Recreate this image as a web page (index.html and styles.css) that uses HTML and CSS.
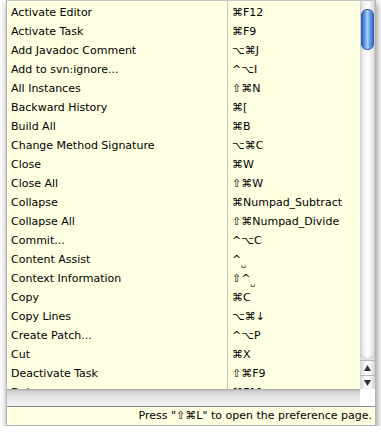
FILE: index.html
```html
<!DOCTYPE html>
<html>
<head>
<meta charset="utf-8">
<link rel="stylesheet" href="styles.css">
</head>
<body>
<div class="window">
  <div class="main">
    <div class="table">
      <div class="col names">
        <div class="row">Activate Editor</div>
        <div class="row">Activate Task</div>
        <div class="row">Add Javadoc Comment</div>
        <div class="row">Add to svn:ignore...</div>
        <div class="row">All Instances</div>
        <div class="row">Backward History</div>
        <div class="row">Build All</div>
        <div class="row">Change Method Signature</div>
        <div class="row">Close</div>
        <div class="row">Close All</div>
        <div class="row">Collapse</div>
        <div class="row">Collapse All</div>
        <div class="row">Commit...</div>
        <div class="row">Content Assist</div>
        <div class="row">Context Information</div>
        <div class="row">Copy</div>
        <div class="row">Copy Lines</div>
        <div class="row">Create Patch...</div>
        <div class="row">Cut</div>
        <div class="row">Deactivate Task</div>
        <div class="row">Debug</div>
      </div>
      <div class="col keys">
        <div class="row">⌘F12</div>
        <div class="row">⌘F9</div>
        <div class="row">⌥⌘J</div>
        <div class="row">^⌥I</div>
        <div class="row">⇧⌘N</div>
        <div class="row">⌘[</div>
        <div class="row">⌘B</div>
        <div class="row">⌥⌘C</div>
        <div class="row">⌘W</div>
        <div class="row">⇧⌘W</div>
        <div class="row">⌘Numpad_Subtract</div>
        <div class="row">⇧⌘Numpad_Divide</div>
        <div class="row">^⌥C</div>
        <div class="row">^<span class="sp">␣</span></div>
        <div class="row">⇧^<span class="sp">␣</span></div>
        <div class="row">⌘C</div>
        <div class="row">⌥⌘↓</div>
        <div class="row">^⌥P</div>
        <div class="row">⌘X</div>
        <div class="row">⇧⌘F9</div>
        <div class="row">⌘F11</div>
      </div>
    </div>
    <div class="vscroll">
      <div class="track"><div class="thumb"></div></div>
      <div class="arrow up"><svg width="7" height="6" viewBox="0 0 7 6"><polygon points="3.5,0 7,6 0,6" fill="#333"/></svg></div>
      <div class="arrow down"><svg width="7" height="6" viewBox="0 0 7 6"><polygon points="0,0 7,0 3.5,6" fill="#333"/></svg></div>
    </div>
  </div>
  <div class="hbar">
    <div class="htrack"></div>
    <div class="corner"></div>
  </div>
  <div class="status">Press "⇧⌘L" to open the preference page.</div>
</div>
</body>
</html>
```
FILE: styles.css
```css
html, body {
  margin: 0;
  padding: 0;
  background: #ffffff;
}
body {
  font-family: "DejaVu Sans", "Liberation Sans", sans-serif;
  font-size: 11px;
  color: #000;
}
.window {
  margin-left: 6px;
  width: 368px;
  height: 424px;
  border: 1px solid #b4b4b4;
  border-top-color: #c8c8c8;
  background: #ffffe1;
  box-shadow: 1px 3px 7px rgba(0, 0, 0, 0.45);
  display: flex;
  flex-direction: column;
  overflow: hidden;
}
.main {
  display: flex;
  height: 388px;
}
.table {
  flex: 1;
  display: flex;
  overflow: hidden;
  padding-top: 2px;
}
.col {
  display: flex;
  flex-direction: column;
}
.names {
  width: 220px;
}
.keys {
  flex: 1;
  border-left: 1px solid #c4c4bc;
  margin-top: -2px;
  padding-top: 2px;
}
.row {
  height: 19px;
  line-height: 19px;
  padding-left: 4px;
  white-space: nowrap;
  flex: none;
}
.sp {
  font-size: 8px;
  vertical-align: -3px;
}
.vscroll {
  width: 15px;
  display: flex;
  flex-direction: column;
  background: linear-gradient(to right, #d4d4d4, #f0f0f0 25%, #ffffff 50%, #f0f0f0 75%, #d0d0d0);
}
.track {
  flex: 1;
  padding-top: 8px;
  display: flex;
  flex-direction: column;
  align-items: center;
  border-bottom-left-radius: 7px;
  border-bottom-right-radius: 7px;
  box-shadow: inset 0 -2px 2px rgba(0, 0, 0, 0.12);
}
.thumb {
  width: 11px;
  height: 39px;
  border-radius: 6px;
  border: 1px solid #3a5e9e;
  background: linear-gradient(to right, #2c5fc4, #6fa6f2 30%, #a8cffb 50%, #6aa2ee 70%, #3669c8);
  box-sizing: content-box;
}
.arrow {
  height: 15px;
  display: flex;
  align-items: center;
  justify-content: center;
  border-top: 1px solid #b8b8b8;
  box-sizing: border-box;
}
.arrow.down {
  height: 14px;
}
.hbar {
  display: flex;
  height: 17px;
  border-bottom: 1px solid #8c8c8c;
}
.htrack {
  flex: 1;
  background: linear-gradient(#a8a8a8, #d2d2d2 15%, #e6e6e6 45%, #f2f2f2);
}
.corner {
  width: 15px;
  background: #ffffff;
}
.status {
  flex: 1;
  text-align: right;
  padding-right: 3px;
  line-height: 17px;
  white-space: nowrap;
}
```
